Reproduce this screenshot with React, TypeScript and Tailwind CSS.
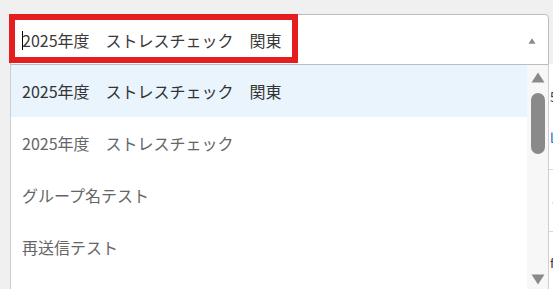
import React from "react";

const options = [
  "2025年度　ストレスチェック　関東",
  "2025年度　ストレスチェック",
  "グループ名テスト",
  "再送信テスト",
  "テスト",
];

function Triangle({ up, className }: { up?: boolean; className?: string }) {
  return (
    <svg viewBox="0 0 14 11" className={className}>
      {up ? (
        <path d="M7 0.5 L13.5 10.5 L0.5 10.5 Z" fill="currentColor" />
      ) : (
        <path d="M0.5 0.5 L13.5 0.5 L7 10.5 Z" fill="currentColor" />
      )}
    </svg>
  );
}

export default function App() {
  const selected = 0;
  return (
    <div
      className="relative w-[553px] h-[289px] overflow-hidden bg-[#f0f0f0] pt-[14px] pl-[10px]"
      style={{ fontFamily: '"Noto Sans CJK JP", "Noto Sans", sans-serif' }}
    >
      {/* page content peeking out behind the dropdown */}
      <div className="absolute left-[549px] top-[64px] w-[40px] h-[225px] bg-white">
        <div className="h-[106px] border-b border-[#d8d8d8] pt-[26px] pl-[1px] text-[13px] leading-none text-[#333]">
          5<div className="mt-[28px] text-[#1565c0]">l</div>
        </div>
        <div className="h-[62px] border-b border-[#d8d8d8] pt-[26px] pl-[1px] text-[13px] leading-none text-[#333]">
          ·
        </div>
        <div className="pt-[24px] pl-[1px] text-[13px] leading-none text-[#333]">f</div>
      </div>

      <div className="relative w-[539px]">
        {/* select box */}
        <div className="h-[51px] bg-white border border-[#bdbdbd] rounded-t-[4px] flex items-center pl-[11px] pr-[11px]">
          <span className="w-px h-[19px] bg-black -mb-px" />
          <span className="flex-1 text-[16px] text-[#3a3a3a] leading-none -ml-px">{options[selected]}</span>
          <Triangle up className="w-[10px] h-[6px] text-[#8c8c8c] mt-[2px]" />
        </div>

        {/* dropdown list */}
        <div className="h-[225px] bg-white border-l border-r border-[#cfcfcf] flex">
          <div className="flex-1 overflow-hidden">
            {options.map((o, i) => (
              <div
                key={o}
                className={
                  "h-[52px] flex items-center pl-[11px] text-[16px] leading-none " +
                  (i === selected ? "bg-[#eaf4fd] text-[#333]" : "text-[#666]")
                }
              >
                {i < 4 ? o : ""}
              </div>
            ))}
          </div>
          <div className="w-[21px] bg-[#f7f7f7] flex flex-col items-center pt-[7px] pb-[5px]">
            <Triangle up className="w-[14px] h-[11px] text-[#8a8a8a]" />
            <div className="w-[14px] h-[61px] mt-[10px] rounded-full bg-[#8a8a8a]" />
            <div className="flex-1" />
            <Triangle className="w-[14px] h-[11px] text-[#8a8a8a]" />
          </div>
        </div>

        {/* highlight annotation */}
        <div className="absolute -left-px top-0 w-[289px] h-[49px] border-[6px] border-[#e41e1e] pointer-events-none" />
      </div>
    </div>
  );
}
